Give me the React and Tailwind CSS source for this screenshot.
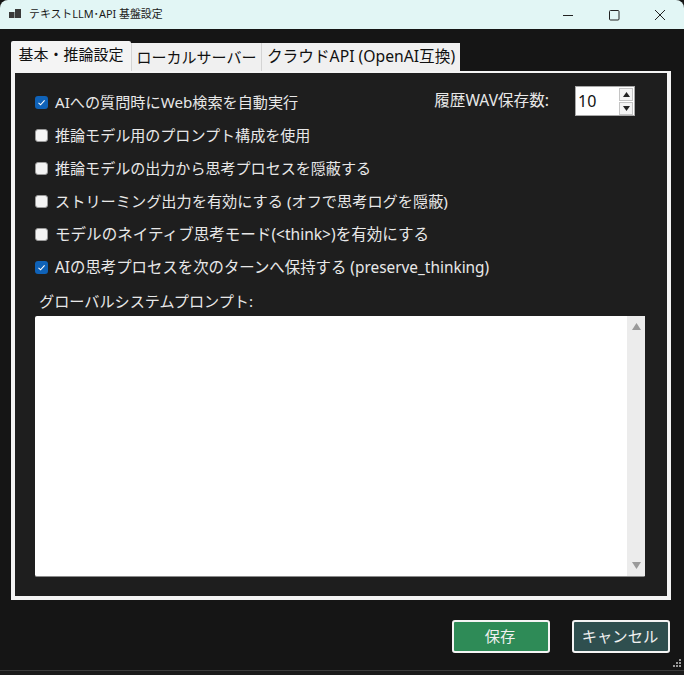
const FONT = "font-['Noto_Sans','Noto_Sans_CJK_JP',sans-serif]";

const options = [
  { label: "AIへの質問時にWeb検索を自動実行", checked: true, size: "text-[15.15px]" },
  { label: "推論モデル用のプロンプト構成を使用", checked: false, size: "text-[15.05px]" },
  { label: "推論モデルの出力から思考プロセスを隠蔽する", checked: false, size: "text-[15.05px]" },
  { label: "ストリーミング出力を有効にする (オフで思考ログを隠蔽)", checked: false, size: "text-[15.2px]" },
  { label: "モデルのネイティブ思考モード(<think>)を有効にする", checked: false, size: "text-[15.55px]" },
  { label: "AIの思考プロセスを次のターンへ保持する (preserve_thinking)", checked: true, size: "text-[15.4px]" },
];

function CheckRow({ label, checked, size }) {
  return (
    <div className="flex h-[33px] items-center gap-[7px]">
      {checked ? (
        <span className="flex h-[13px] w-[13px] shrink-0 items-center justify-center rounded-[3px] bg-[#0f62b8]">
          <svg width="9" height="9" viewBox="0 0 9 9" fill="none" stroke="#ffffff" strokeWidth="1.1">
            <path d="M1.5 4.8 L3.6 6.8 L7.6 2.4" />
          </svg>
        </span>
      ) : (
        <span className="h-[13px] w-[13px] shrink-0 rounded-[3px] border border-[#9a9a9a] bg-[#f4f4f4]" />
      )}
      <span className={`${size} leading-none whitespace-nowrap text-[#e8e8e8]`}>{label}</span>
    </div>
  );
}

function Arrow({ up, w = 7, h = 5 }) {
  return (
    <svg width={w} height={h} viewBox="0 0 9 6" preserveAspectRatio="none">
      <path d={up ? "M4.5 0 L9 6 L0 6 Z" : "M0 0 L9 0 L4.5 6 Z"} fill="currentColor" />
    </svg>
  );
}

export default function App() {
  return (
    <div className={`relative flex h-[675px] w-[684px] flex-col overflow-hidden bg-[#151515] ${FONT}`}>
      <div className="flex h-[29px] shrink-0 items-center rounded-tl-[8px] rounded-tr-[8px] bg-[#e2f6f5] pr-[1px] pl-[9px] text-[#1a1a1a]">
        <svg width="12" height="12" viewBox="0 0 12 12" fill="#3a3a3a">
          <rect x="0" y="3" width="5.5" height="6" />
          <rect x="6" y="0" width="6" height="9" />
        </svg>
        <span className="ml-[8px] text-[10.9px] leading-none">テキストLLM･API 基盤設定</span>
        <div className="ml-auto flex items-center">
          <div className="flex w-[46px] justify-center">
            <svg width="12" height="12" viewBox="0 0 12 12" stroke="#222" fill="none"><path d="M1 6.5 H11" /></svg>
          </div>
          <div className="flex w-[46px] justify-center">
            <svg width="12" height="12" viewBox="0 0 12 12" stroke="#222" fill="none"><rect x="1.5" y="1.5" width="9.5" height="9.5" rx="1" /></svg>
          </div>
          <div className="flex w-[46px] justify-center">
            <svg width="12" height="12" viewBox="0 0 12 12" stroke="#222" fill="none"><path d="M1 1 L11 11 M11 1 L1 11" /></svg>
          </div>
        </div>
      </div>

      <div className="flex min-h-0 flex-1 flex-col pr-[13px] pl-[11px]">
        <div className="mt-[12px] flex h-[30px] items-end text-[15px] leading-none whitespace-nowrap text-[#111]">
          <div className="flex h-[30px] w-[120px] items-center justify-center rounded-t-[2px] bg-[#f4f4f4] pb-[3px]">基本・推論設定</div>
          <div className="flex h-[28px] w-[130px] items-center justify-center border-l border-[#d4d4d4] bg-[#f0f0f0]">ローカルサーバー</div>
          <div className="flex h-[28px] w-[199px] items-center justify-center border-l border-[#d4d4d4] bg-[#f0f0f0] text-[15.7px]">クラウドAPI (OpenAI互換)</div>
        </div>

        <div className="flex h-[529px] flex-col border-[4px] border-t-[2px] border-[#f4f4f4] bg-[#1e1e1e] pr-[22px] pl-[20px]">
          <div className="flex items-start pt-[13px]">
            <div className="flex w-0 flex-1 flex-col">
              {options.map((o) => (
                <CheckRow key={o.label} label={o.label} checked={o.checked} size={o.size} />
              ))}
            </div>
            <div className="flex shrink-0 items-center pr-[10px]">
              <span className="text-[15.6px] leading-none whitespace-nowrap text-[#e8e8e8]">履歴WAV保存数:</span>
              <div className="ml-[26px] flex h-[30px] w-[60px] items-center justify-between border border-[#a8a8a8] bg-white pr-[1px] pl-[2px]">
                <span className="text-[16px] leading-none text-[#111]">10</span>
                <div className="flex flex-col gap-[1px]">
                  <span className="flex h-[13px] w-[14px] items-center justify-center border border-[#c4c4c4] bg-[#f4f4f4] text-[#222]">
                    <Arrow up />
                  </span>
                  <span className="flex h-[13px] w-[14px] items-center justify-center border border-[#c4c4c4] bg-[#f4f4f4] text-[#222]">
                    <Arrow />
                  </span>
                </div>
              </div>
            </div>
          </div>

          <div className="mt-[5px] pl-[4px] text-[15.15px] leading-[24px] text-[#e8e8e8]">グローバルシステムプロンプト:</div>

          <div className="mt-[3px] flex h-[261px] justify-end rounded-[2px] border-b border-[#8a8a8a] bg-white">
            <div className="flex w-[18px] flex-col items-center justify-between bg-[#ececec] py-[7px] text-[#9a9a9a]">
              <Arrow up w={9} h={7} />
              <Arrow w={9} h={7} />
            </div>
          </div>
        </div>

        <div className="flex justify-end gap-[22px] pt-[20px] pr-[1px] text-[15.3px] leading-none text-[#f0f0f0]">
          <button type="button" className="flex h-[33px] w-[98px] items-center justify-center rounded-[3px] border-[2px] border-[#f4f4f4] bg-[#2e8b57] pr-[2px]">
            保存
          </button>
          <button type="button" className="flex h-[33px] w-[98px] items-center justify-center rounded-[3px] border-[2px] border-[#f4f4f4] bg-[#2f4f4f] pr-[2px]">
            キャンセル
          </button>
        </div>
      </div>

      <div className="h-[5px] shrink-0 border-t border-[#3a3a3a] bg-[#1b1b1b]" />

      <svg className="absolute right-[2px] bottom-[7px]" width="9" height="9" viewBox="0 0 9 9" fill="#9a9a9a">
        <rect x="6" y="0" width="2" height="2" />
        <rect x="3" y="3" width="2" height="2" />
        <rect x="6" y="3" width="2" height="2" />
        <rect x="0" y="6" width="2" height="2" />
        <rect x="3" y="6" width="2" height="2" />
        <rect x="6" y="6" width="2" height="2" />
      </svg>
    </div>
  );
}
